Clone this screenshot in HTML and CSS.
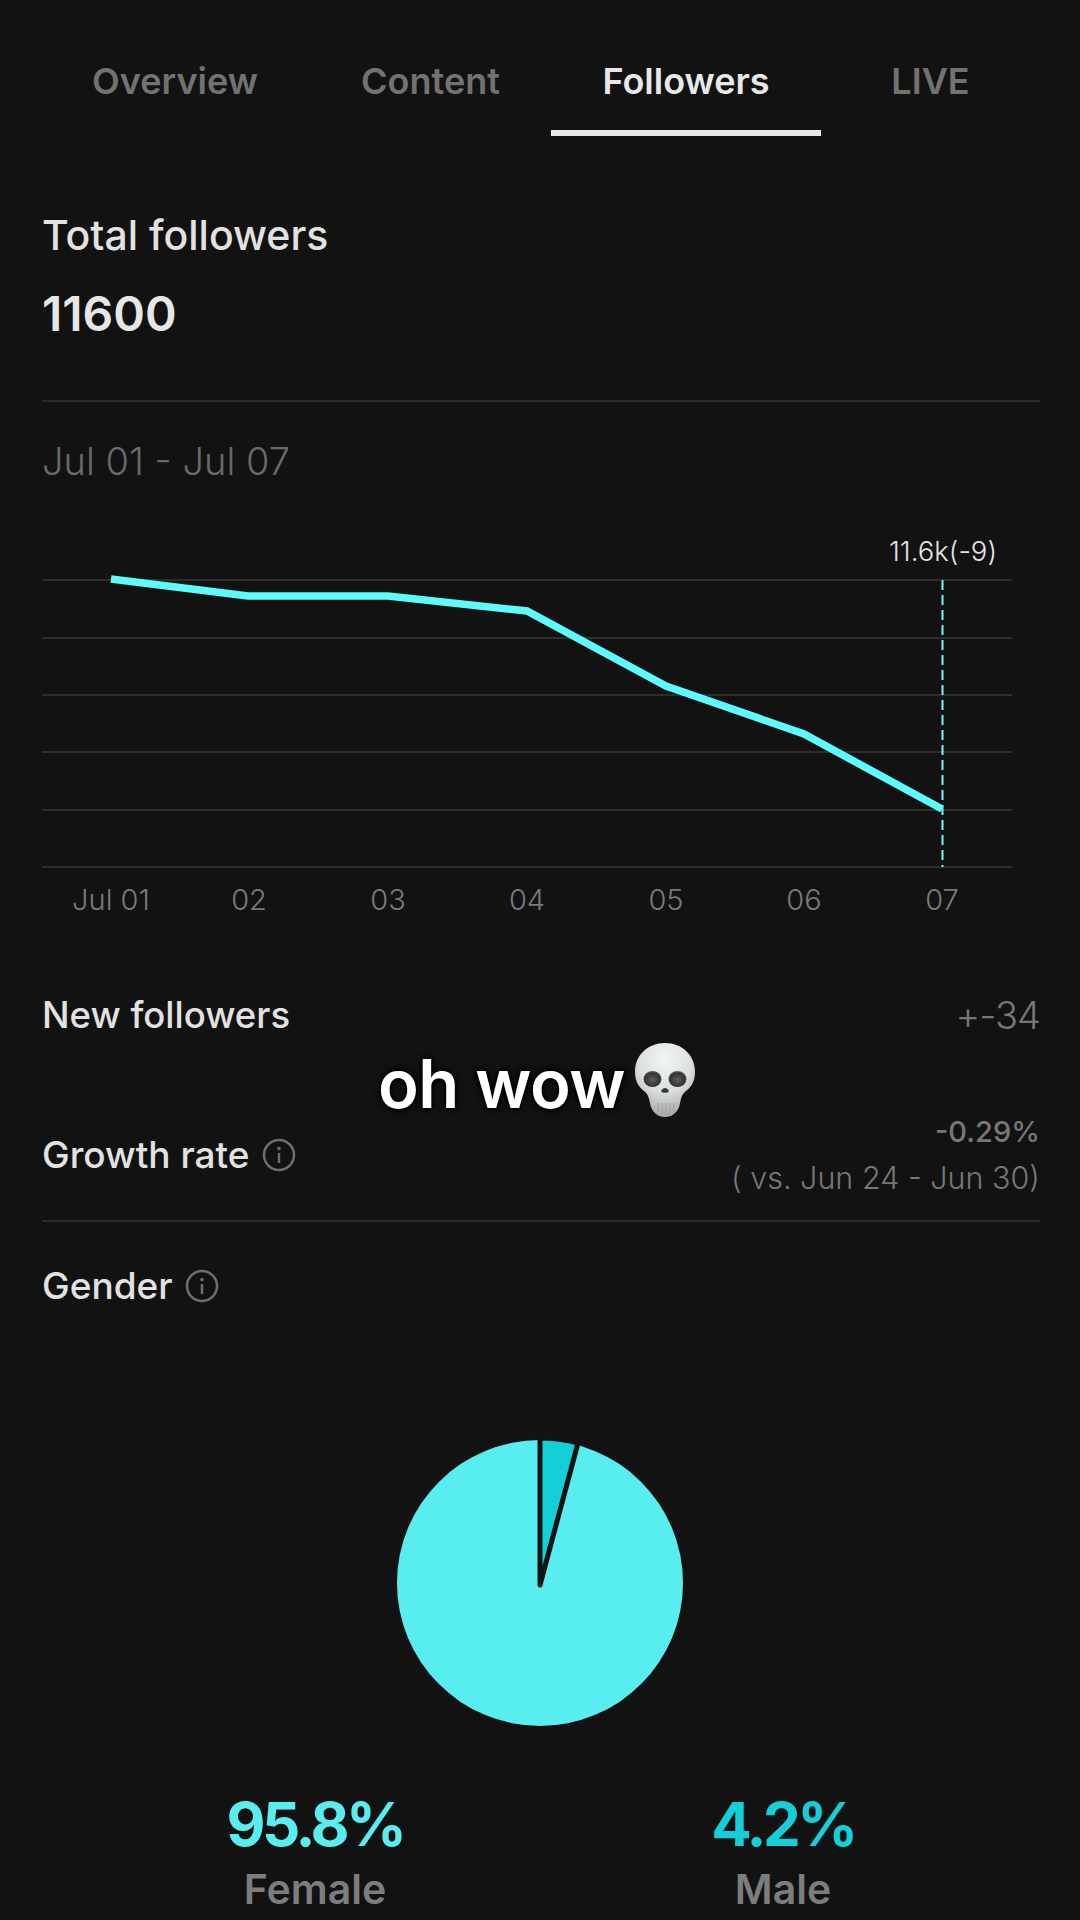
FILE: index.html
```html
<!DOCTYPE html>
<html lang="en">
  <head>
    <meta charset="UTF-8" />
    <title>Followers</title>
    <link rel="stylesheet" href="styles.css">
  </head>
  <body>
    <div class="page">
      <div class="tabs">
        <div class="tab">Overview</div>
        <div class="tab">Content</div>
        <div class="tab active">Followers</div>
        <div class="tab">LIVE</div>
      </div>

      <div class="section">
        <div class="title total-title">Total followers</div>
        <div class="total-value">11600</div>
        <div class="divider total-divider"></div>
        <div class="date-range">Jul 01 - Jul 07</div>
      </div>

      <svg class="chart" viewBox="0 530 1080 400" width="1080" height="400">
        <g class="grid-lines">
          <line x1="42" x2="1012" y1="580" y2="580" />
          <line x1="42" x2="1012" y1="638" y2="638" />
          <line x1="42" x2="1012" y1="695" y2="695" />
          <line x1="42" x2="1012" y1="752" y2="752" />
          <line x1="42" x2="1012" y1="810" y2="810" />
          <line x1="42" x2="1012" y1="867" y2="867" />
        </g>
        <polyline class="trend" points="111,579 248,596 388,596 527,611 666,686 804,734 942,809" />
        <line class="marker" x1="942.5" x2="942.5" y1="580" y2="867" />
        <text class="marker-label" x="943" y="561">11.6k(-9)</text>
        <g class="axis">
          <text x="111" y="910">Jul 01</text>
          <text x="249" y="910">02</text>
          <text x="388" y="910">03</text>
          <text x="527" y="910">04</text>
          <text x="666" y="910">05</text>
          <text x="804" y="910">06</text>
          <text x="942" y="910">07</text>
        </g>
      </svg>

      <div class="section">
        <div class="stat-row new-row">
          <div class="title new-title">New followers</div>
          <div class="new-value">+-34</div>
        </div>
        <div class="stat-row growth-row">
          <div class="title with-icon">
            Growth rate
            <svg class="info" viewBox="0 0 34 34" width="34" height="34">
              <circle cx="17" cy="17" r="15" />
              <circle class="dot" cx="17" cy="10.5" r="1.8" />
              <line x1="17" x2="17" y1="15" y2="25" />
            </svg>
          </div>
          <div class="growth-value">
            <div class="growth-pct">-0.29%</div>
            <div class="growth-vs">( vs. Jun 24 - Jun 30)</div>
          </div>
        </div>
        <div class="divider growth-divider"></div>
        <div class="title with-icon gender-title">
          Gender
          <svg class="info" viewBox="0 0 34 34" width="34" height="34">
            <circle cx="17" cy="17" r="15" />
            <circle class="dot" cx="17" cy="10.5" r="1.8" />
            <line x1="17" x2="17" y1="15" y2="25" />
          </svg>
        </div>
      </div>

      <svg class="pie" viewBox="0 0 300 300" width="300" height="300">
        <circle class="pie-female" cx="150" cy="150" r="143" />
        <path class="pie-male" d="M150 152 L150 5 A145 145 0 0 1 188 10 Z" />
      </svg>

      <div class="gender-stats">
        <div class="gender-col">
          <div class="pct female">95.8%</div>
          <div class="gender-label">Female</div>
        </div>
        <div class="gender-col">
          <div class="pct male">4.2%</div>
          <div class="gender-label">Male</div>
        </div>
      </div>

      <div class="caption">
        <span>oh wow</span>
        <svg class="skull" viewBox="0 0 60 74" width="60" height="74">
          <defs>
            <radialGradient id="bone" cx="50%" cy="22%" r="80%">
              <stop offset="0%" stop-color="#f0f5f5" />
              <stop offset="55%" stop-color="#dcdfdf" />
              <stop offset="100%" stop-color="#a3a4a4" />
            </radialGradient>
            <radialGradient id="socket" cx="50%" cy="55%" r="60%">
              <stop offset="0%" stop-color="#5e5e5e" />
              <stop offset="70%" stop-color="#333" />
              <stop offset="100%" stop-color="#777" />
            </radialGradient>
          </defs>
          <path fill="url(#bone)" d="M30 0 C47 0 60 12 60 29 C60 40 55 45 51 48 C47 51 46 55 45 60 C44 68 38 74 30 74 C22 74 16 68 15 60 C14 55 13 51 9 48 C5 45 0 40 0 29 C0 12 13 0 30 0 Z" />
          <ellipse fill="url(#socket)" cx="17.5" cy="36" rx="9" ry="8" />
          <ellipse fill="url(#socket)" cx="42.5" cy="36" rx="9" ry="8" />
          <path fill="#383838" d="M30 45 C32.5 45 34.5 48 33.5 49 C32.5 50 27.5 50 26.5 49 C25.5 48 27.5 45 30 45 Z" />
          <g class="teeth">
            <line x1="23" x2="23.5" y1="60" y2="69" />
            <line x1="27" x2="27.3" y1="60" y2="71" />
            <line x1="31" x2="31" y1="60" y2="71" />
            <line x1="35" x2="34.7" y1="60" y2="71" />
            <line x1="39" x2="38.5" y1="60" y2="69" />
          </g>
        </svg>
      </div>
    </div>
  </body>
</html>
```

FILE: styles.css
```css
html,
body {
  margin: 0;
  padding: 0;
  background: #121212;
}

.page {
  position: relative;
  width: 1080px;
  height: 1920px;
  overflow: hidden;
  background: #121212;
  color: #e6e6e6;
  font-family: "Inter", "Liberation Sans", sans-serif;
}

.tabs {
  display: grid;
  grid-template-columns: 270px 241px 270px 219px;
  margin-left: 40px;
}

.tab {
  padding: 58px 0 26px;
  border-bottom: 6px solid transparent;
  font-size: 36px;
  font-weight: 600;
  line-height: 46px;
  text-align: center;
  color: #727272;
}

.tab.active {
  color: #e8e8e8;
  border-bottom-color: #e8e8e8;
}

.section {
  padding: 0 40px 0 42px;
}

.title {
  font-size: 37px;
  font-weight: 500;
  line-height: 44px;
  color: #e2e2e2;
}

.total-title {
  margin-top: 77px;
  font-size: 41px;
}

.new-title {
  font-size: 36.5px;
}

.total-value {
  margin-top: 27px;
  font-size: 48px;
  font-weight: 600;
  line-height: 60px;
  color: #e6e6e6;
}

.divider {
  height: 2px;
  background: #2b2b2b;
}

.total-divider {
  margin-top: 56px;
}

.date-range {
  margin-top: 37px;
  font-size: 38px;
  font-weight: 300;
  line-height: 44px;
  color: #6a6a6a;
}

.chart {
  display: block;
  margin-top: 47px;
}

.grid-lines line {
  stroke: #2e2e2e;
  stroke-width: 2;
}

.trend {
  fill: none;
  stroke: #5cfcfd;
  stroke-width: 7.5;
}

.marker {
  stroke: #70f8f8;
  stroke-width: 2;
  stroke-dasharray: 10 5;
}

.marker-label {
  font-size: 27.5px;
  font-weight: 300;
  fill: #e4e4e4;
  text-anchor: middle;
}

.axis text {
  font-size: 29px;
  font-weight: 300;
  fill: #7a7a7a;
  text-anchor: middle;
}

.stat-row {
  display: flex;
  justify-content: space-between;
  align-items: center;
}

.new-row {
  margin-top: 63px;
}

.new-value {
  font-size: 38px;
  font-weight: 300;
  line-height: 44px;
  letter-spacing: -1px;
  color: #777;
}

.growth-row {
  margin-top: 72px;
}

.with-icon {
  display: flex;
  align-items: center;
  gap: 12px;
}

.info circle {
  fill: none;
  stroke: #6e6e6e;
  stroke-width: 2.5;
}

.info .dot {
  fill: #6e6e6e;
  stroke: none;
}

.info line {
  stroke: #6e6e6e;
  stroke-width: 2.5;
}

.growth-value {
  text-align: right;
}

.growth-pct {
  font-size: 29px;
  font-weight: 500;
  line-height: 46px;
  color: #777;
}

.growth-vs {
  font-size: 30.5px;
  font-weight: 300;
  line-height: 46px;
  color: #777;
}

.growth-divider {
  margin-top: 19px;
}

.gender-title {
  margin-top: 42px;
}

.pie {
  display: block;
  margin: 125px auto 0;
}

.pie-female {
  fill: #58eef0;
}

.pie-male {
  fill: #14cfd8;
  stroke: #121212;
  stroke-width: 5;
  stroke-linejoin: round;
}

.gender-stats {
  display: grid;
  grid-template-columns: 468px 468px;
  margin-top: 55px;
  padding-left: 81px;
}

.gender-col {
  text-align: center;
}

.pct {
  font-size: 60px;
  font-weight: 700;
  line-height: 72px;
  letter-spacing: -3.5px;
}

.pct.female {
  color: #58eef0;
}

.pct.male {
  color: #14cfd8;
}

.gender-label {
  margin-top: 4px;
  font-size: 41px;
  font-weight: 600;
  line-height: 50px;
  color: #7d7d7d;
}

/* burned-in video caption, sits over the stats */
.caption {
  position: absolute;
  left: 378px;
  top: 1043px;
  display: flex;
  align-items: flex-start;
  gap: 10px;
}

.caption span {
  font-size: 67px;
  font-weight: 600;
  line-height: 82px;
  letter-spacing: -0.5px;
  color: #fff;
  text-shadow: 0 0 6px #000, 0 0 6px #000, 0 0 3px #000;
}

.teeth line {
  stroke: #9a9a9a;
  stroke-width: 1;
}
```
